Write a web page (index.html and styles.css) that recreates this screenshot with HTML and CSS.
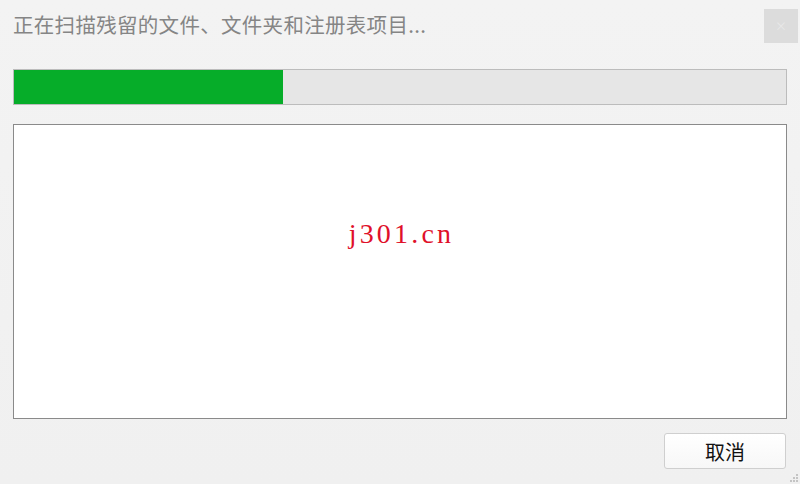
FILE: index.html
```html
<!DOCTYPE html>
<html>
<head>
<meta charset="utf-8">
<link rel="stylesheet" href="styles.css">
</head>
<body>
<div class="dialog">
  <div class="header">
    <div class="title">正在扫描残留的文件、文件夹和注册表项目...</div>
    <div class="close"><span class="close-x">×</span></div>
  </div>
  <div class="progress"><div class="fill" style="width:269px"></div></div>
  <div class="panel"><span class="mark">j301.cn</span></div>
  <div class="footer">
    <button class="btn">取消</button>
  </div>
  <div class="grip">
    <svg width="10" height="10" viewBox="0 0 10 10">
      <g fill="#c4c4c4">
        <rect x="7" y="1" width="2" height="2"/>
        <rect x="4" y="4" width="2" height="2"/>
        <rect x="7" y="4" width="2" height="2"/>
        <rect x="1" y="7" width="2" height="2"/>
        <rect x="4" y="7" width="2" height="2"/>
        <rect x="7" y="7" width="2" height="2"/>
      </g>
    </svg>
  </div>
</div>
</body>
</html>
```
FILE: styles.css
```css
html, body {
  margin: 0;
  padding: 0;
}
body {
  width: 800px;
  height: 484px;
  overflow: hidden;
  background: #f0f0f0;
  font-family: "Noto Sans CJK SC", "Liberation Sans", sans-serif;
}
.dialog {
  position: relative;
  width: 800px;
  height: 484px;
  box-sizing: border-box;
  padding: 0 13px;
  background: linear-gradient(#f3f3f3, #f0f0f0);
  display: flex;
  flex-direction: column;
}
.header {
  height: 69px;
  display: flex;
  align-items: flex-start;
  justify-content: space-between;
}
.title {
  margin-top: 8px;
  font-size: 20.5px;
  line-height: 32px;
  color: #858585;
  letter-spacing: 0.3px;
}
.close {
  margin-top: 9px;
  margin-right: -11px;
  width: 34px;
  height: 34px;
  background: #dcdcdc;
  display: flex;
  align-items: center;
  justify-content: center;
}
.close-x {
  color: #e8e8e8;
  font-size: 12px;
  line-height: 1;
}
.progress {
  height: 36px;
  box-sizing: border-box;
  border: 1px solid #bcbcbc;
  background: #e6e6e6;
}
.fill {
  height: 100%;
  background: #06ad29;
}
.panel {
  margin-top: 19px;
  height: 295px;
  box-sizing: border-box;
  border: 1px solid #8a8a8a;
  background: #fff;
  display: flex;
  align-items: center;
  justify-content: center;
}
.mark {
  font-family: "Liberation Serif", serif;
  font-size: 28px;
  letter-spacing: 3.2px;
  color: #e0102a;
  margin-top: -76px;
  margin-left: 3px;
}
.footer {
  margin-top: 14px;
  display: flex;
  justify-content: flex-end;
}
.btn {
  width: 122px;
  height: 36px;
  margin-right: 1px;
  border: 1px solid #cfcfcf;
  border-radius: 3px;
  background: linear-gradient(#ffffff, #f7f7f7);
  font-family: "Noto Sans CJK SC", sans-serif;
  font-size: 20px;
  color: #111;
  padding: 0;
}
.grip {
  position: absolute;
  right: 1px;
  bottom: 1px;
  width: 10px;
  height: 10px;
}
.grip svg {
  display: block;
}
```
